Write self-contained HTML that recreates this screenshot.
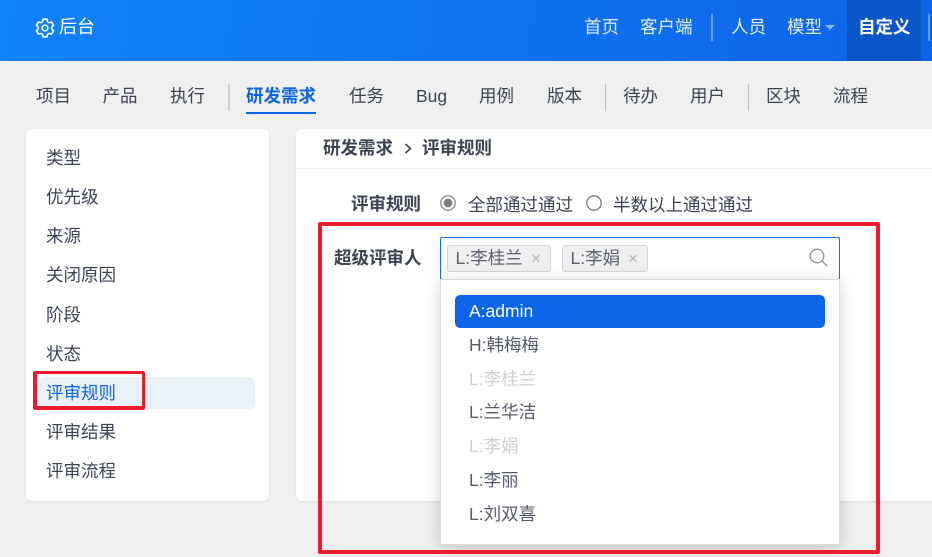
<!DOCTYPE html>
<html lang="zh-CN">
<head>
<meta charset="utf-8">
<title>后台</title>
<style>
html,body{margin:0;padding:0}
body{position:relative;width:932px;height:557px;overflow:hidden;background:#efefef;font-family:"Liberation Sans","Noto Sans CJK SC",sans-serif;font-size:17.5px;color:#3c4353}
.a{position:absolute;white-space:nowrap}
.t{position:absolute;white-space:nowrap;line-height:24px;height:24px}
#hd{left:0;top:0;width:932px;height:61px;background:linear-gradient(95deg,#1183fb 0%,#0d64e6 100%)}
.w{color:#fff;opacity:.88}
.sep{position:absolute;width:1px;background:#bdbdbd}
.card{position:absolute;background:#fff;border-radius:6px;box-shadow:0 1px 2px rgba(0,0,0,.08)}
.red{position:absolute;box-sizing:border-box;border:4px solid #ee1b2d;border-radius:2px}
.tag{position:absolute;box-sizing:border-box;height:27px;top:245px;background:#efefef;border:1px solid #d4d6da;border-radius:3px}
.x{position:absolute;color:#b4b4b4;font-size:17px;line-height:24px;top:247px}
.dim{color:#cfcfcf}
.b{font-weight:700}
</style>
</head>
<body>
<div class="a" id="hd"></div>
<svg class="a" style="left:34px;top:16.5px" width="22" height="22" viewBox="0 0 20 20" fill="none" stroke="#fff" stroke-width="1.4" stroke-linejoin="round"><path d="M8.2 2h3.6l.5 2.3 1.5.9 2.2-.7 1.8 3.1-1.7 1.6v1.7l1.7 1.6-1.8 3.1-2.2-.7-1.5.9-.5 2.3H8.2l-.5-2.3-1.5-.9-2.2.7-1.8-3.1 1.7-1.6V9.2L2.2 7.6 4 4.5l2.2.7 1.5-.9z"/><circle cx="10" cy="10" r="2.6"/></svg>
<div class="t" style="left:59px;top:15px;color:#fff;font-size:18px">后台</div>
<div class="t w" style="left:584px;top:15px">首页</div>
<div class="t w" style="left:640px;top:15px">客户端</div>
<div class="a" style="left:711px;top:14px;width:2px;height:27px;background:rgba(255,255,255,.35)"></div>
<div class="t w" style="left:731px;top:15px">人员</div>
<div class="t w" style="left:787px;top:15px">模型</div>
<div class="a" style="left:825px;top:25px;width:0;height:0;border-left:5px solid transparent;border-right:5px solid transparent;border-top:5px solid rgba(255,255,255,.5)"></div>
<div class="a" style="left:847px;top:0;width:74px;height:61px;background:#0c57c8"></div>
<div class="t b" style="left:858px;top:15px;color:#fff">自定义</div>
<div class="a" style="left:928px;top:14px;width:2px;height:27px;background:rgba(255,255,255,.35)"></div>

<div class="t" style="left:36px;top:84px">项目</div>
<div class="t" style="left:102.5px;top:84px">产品</div>
<div class="t" style="left:170px;top:84px">执行</div>
<div class="sep" style="left:228px;top:84px;height:27px;width:2px;background:#cfcfcf"></div>
<div class="t b" style="left:246px;top:84px;color:#0c64e8">研发需求</div>
<div class="a" style="left:246px;top:112px;width:70px;height:2px;background:#0c64e8"></div>
<div class="t" style="left:349px;top:84px">任务</div>
<div class="t" style="left:416px;top:84px">Bug</div>
<div class="t" style="left:479px;top:84px">用例</div>
<div class="t" style="left:547px;top:84px">版本</div>
<div class="sep" style="left:605px;top:84px;height:27px"></div>
<div class="t" style="left:623px;top:84px">待办</div>
<div class="t" style="left:690px;top:84px">用户</div>
<div class="sep" style="left:748px;top:84px;height:27px"></div>
<div class="t" style="left:766px;top:84px">区块</div>
<div class="t" style="left:833px;top:84px">流程</div>

<div class="card" style="left:26px;top:129px;width:243px;height:372px"></div>
<div class="a" style="left:39px;top:377px;width:216px;height:32px;background:#e8f0fa;border-radius:6px"></div>
<div class="t" style="left:46px;top:146px">类型</div>
<div class="t" style="left:46px;top:185px">优先级</div>
<div class="t" style="left:46px;top:224px">来源</div>
<div class="t" style="left:46px;top:263px">关闭原因</div>
<div class="t" style="left:46px;top:303px">阶段</div>
<div class="t" style="left:46px;top:342px">状态</div>
<div class="t" style="left:46px;top:381px;color:#0c64e8">评审规则</div>
<div class="t" style="left:46px;top:420px">评审结果</div>
<div class="t" style="left:46px;top:459px">评审流程</div>
<div class="red" style="left:33px;top:371px;width:112px;height:39px;border-width:3px 3px 4px 4px"></div>

<div class="card" style="left:296px;top:129px;width:650px;height:372px"></div>
<div class="a" style="left:296px;top:168px;width:636px;height:1px;background:#eeeeee"></div>
<div class="t b" style="left:323px;top:136px">研发需求</div>
<svg class="a" style="left:403px;top:142px" width="10" height="13" viewBox="0 0 10 13" fill="none" stroke="#3c4353" stroke-width="1.6"><path d="M2.5 2l5 4.5-5 4.5"/></svg>
<div class="t b" style="left:422px;top:136px">评审规则</div>

<div class="t b" style="left:351px;top:192px">评审规则</div>
<svg class="a" style="left:440px;top:195px" width="17" height="17" viewBox="0 0 17 17"><circle cx="8" cy="8" r="7.2" fill="#fff" stroke="#8a8a8a" stroke-width="1.3"/><circle cx="8" cy="8" r="4.4" fill="#7d7d7d"/></svg>
<div class="t" style="left:468px;top:193px">全部通过通过</div>
<svg class="a" style="left:586px;top:195px" width="17" height="17" viewBox="0 0 17 17"><circle cx="8" cy="8" r="7.2" fill="#fff" stroke="#777" stroke-width="1.3"/></svg>
<div class="t" style="left:613px;top:193px">半数以上通过通过</div>

<div class="t b" style="left:334px;top:246px">超级评审人</div>
<div class="a" style="left:440px;top:237px;width:398px;height:41px;background:#fff;border:1px solid #1a6ee0;border-radius:2px"></div>
<div class="tag" style="left:447px;width:104px"></div>
<div class="t" style="left:455.5px;top:246px;color:#5a6070">L:李桂兰</div>
<div class="x" style="left:531px">×</div>
<div class="tag" style="left:562px;width:86px"></div>
<div class="t" style="left:570.5px;top:246px;color:#5a6070">L:李娟</div>
<div class="x" style="left:628px">×</div>
<svg class="a" style="left:809px;top:248px" width="20" height="20" viewBox="0 0 20 20" fill="none" stroke="#8e95a3" stroke-width="1.4"><circle cx="8" cy="8" r="6.8"/><path d="M12.8 12.8l5.2 5.2"/></svg>

<div class="a" style="left:441px;top:280px;width:398px;height:264px;background:#fff;box-shadow:0 0 0 1px #dcdcdc,0 3px 16px rgba(0,0,0,.2)"></div>
<div class="a" style="left:455px;top:295px;width:370px;height:33px;background:#0c64e8;border-radius:5px"></div>
<div class="t" style="left:469px;top:299px;color:#fff">A:admin</div>
<div class="t" style="left:469px;top:333px;color:#555b6a">H:韩梅梅</div>
<div class="t dim" style="left:469px;top:367px">L:李桂兰</div>
<div class="t" style="left:469px;top:400px;color:#555b6a">L:兰华洁</div>
<div class="t dim" style="left:469px;top:434px">L:李娟</div>
<div class="t" style="left:469px;top:468px;color:#555b6a">L:李丽</div>
<div class="t" style="left:469px;top:502px;color:#555b6a">L:刘双喜</div>

<div class="red" style="left:318px;top:222px;width:562px;height:332px"></div>
</body>
</html>
